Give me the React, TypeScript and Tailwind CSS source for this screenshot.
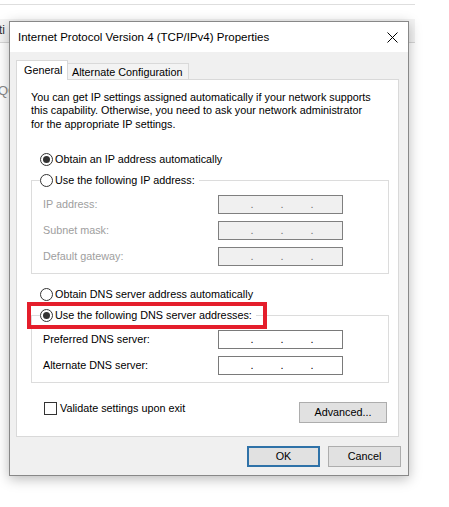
import React from "react";

const F = "font-['Liberation_Sans',Arial,sans-serif]";

function Radio({ checked }: { checked?: boolean }) {
  return (
    <span className="w-[13px] h-[13px] rounded-full border border-[#333333] bg-white flex items-center justify-center shrink-0">
      {checked && <span className="w-[7px] h-[7px] rounded-full bg-[#333333]" />}
    </span>
  );
}

function IpBox({ disabled }: { disabled?: boolean }) {
  return (
    <div
      className={`w-[125px] h-[19px] border ${
        disabled ? "border-[#7f7f7f] bg-[#f0f0f0] text-[#707070]" : "border-[#7a7a7a] bg-white text-black"
      } flex items-center pl-[31px] gap-[26px] text-[10.8px] leading-[13px]`}
    >
      <span className="w-[4px] text-center">.</span>
      <span className="w-[4px] text-center">.</span>
      <span className="w-[4px] text-center">.</span>
    </div>
  );
}

function Row({ label, disabled }: { label: string; disabled?: boolean }) {
  return (
    <div className="flex items-center h-[19px] ml-[3px]">
      <span className={`w-[175px] ${disabled ? "text-[#9e9e9e]" : "text-black"}`}>{label}</span>
      <IpBox disabled={disabled} />
    </div>
  );
}

export default function App() {
  return (
    <div className={`relative w-[449px] h-[507px] bg-white overflow-hidden ${F} text-[10.8px] leading-[13px] text-black`}>
      {/* background window */}
      <div className="w-[415px] pt-[4px]">
        <div className="h-px bg-[#dedede]" />
        <div className="h-[14px]" />
        <div className="h-[24px] bg-[#f4f4f4] border-b border-[#d6d6d6] flex items-center">
          <span className="-ml-[1px] text-[12px] text-[#333]">ti</span>
        </div>
        <div className="h-[41px]" />
        <div className="-ml-[2px] text-[13px] text-[#8a8a8a] leading-[14px]">QC</div>
      </div>

      {/* dialog */}
      <div className="absolute left-[9px] top-[21px] w-[400px] border border-[#888888] bg-[#f0f0f0] shadow-[0_3px_12px_rgba(0,0,0,0.28)] flex flex-col">
        <div className="h-[30px] bg-white flex items-center justify-between pl-[8px] pr-[10px]">
          <span className="text-[11.5px] text-black">Internet Protocol Version 4 (TCP/IPv4) Properties</span>
          <svg width="11" height="11" viewBox="0 0 11 11" className="block">
            <path d="M0.5 0.5 L10.5 10.5 M10.5 0.5 L0.5 10.5" stroke="#000" strokeWidth="1" fill="none" />
          </svg>
        </div>

        <div className="pl-[6px] pt-[8px] pb-[8px] flex flex-col">
          {/* tabs */}
          <div className="flex items-end h-[20px]">
            <div className="relative z-10 w-[52px] h-[20px] bg-white border-l border-t border-r border-[#d9d9d9] flex items-center pl-[7px]">
              General
            </div>
            <div className="w-[121px] h-[17px] bg-[#f3f3f3] border-t border-r border-[#d9d9d9] flex items-center pl-[4px]">
              Alternate Configuration
            </div>
          </div>

          {/* panel */}
          <div className="relative -mt-[1px] w-[383px] bg-white border border-[#d9d9d9] pt-[11px] pb-[13px] flex flex-col">
            <p className="pl-[14px] leading-[13.4px]">
              You can get IP settings assigned automatically if your network supports
              <br />
              this capability. Otherwise, you need to ask your network administrator
              <br />
              for the appropriate IP settings.
            </p>

            <div className="mt-[18px] h-[21px] pl-[23px] flex items-center gap-[2px]">
              <Radio checked />
              <span>Obtain an IP address automatically</span>
            </div>

            <fieldset className="ml-[14px] w-[358px] border border-[#dcdcdc] pl-[8px] pt-[4px] pb-[7px] flex flex-col gap-[7px]">
              <legend className="h-[21px] pr-[4px] flex items-center gap-[2px]">
                <Radio />
                <span>Use the following IP address:</span>
              </legend>
              <Row label="IP address:" disabled />
              <Row label="Subnet mask:" disabled />
              <Row label="Default gateway:" disabled />
            </fieldset>

            <div className="mt-[10px] h-[21px] pl-[23px] flex items-center gap-[2px]">
              <Radio />
              <span>Obtain DNS server address automatically</span>
            </div>

            <fieldset className="ml-[14px] w-[358px] border border-[#dcdcdc] pl-[8px] pt-[4px] pb-[7px] flex flex-col gap-[7px]">
              <legend className="h-[21px] pr-[4px] flex items-center gap-[2px]">
                <Radio checked />
                <span>Use the following DNS server addresses:</span>
              </legend>
              <Row label="Preferred DNS server:" />
              <Row label="Alternate DNS server:" />
            </fieldset>

            <div className="mt-[19px] flex items-start justify-between">
              <div className="ml-[27px] flex items-center gap-[3px] h-[13px]">
                <span className="w-[13px] h-[13px] border border-[#333333] bg-white shrink-0" />
                <span>Validate settings upon exit</span>
              </div>
              <div className="mr-[11px] w-[88px] h-[21px] bg-[#e1e1e1] border border-[#adadad] flex items-center justify-center">
                Advanced...
              </div>
            </div>

            {/* red highlight */}
            <div className="absolute left-[10px] top-[222px] w-[240px] h-[27px] border-[4px] border-[#e41e2b] pointer-events-none" />
          </div>

          {/* buttons */}
          <div className="mt-[9px] flex justify-end gap-[8px] pr-[7px]">
            <div className="w-[73px] h-[21px] bg-[#e1e1e1] border-2 border-[#2f72a8] flex items-center justify-center">
              OK
            </div>
            <div className="w-[73px] h-[21px] bg-[#e1e1e1] border border-[#adadad] flex items-center justify-center">
              Cancel
            </div>
          </div>
        </div>
      </div>
    </div>
  );
}
